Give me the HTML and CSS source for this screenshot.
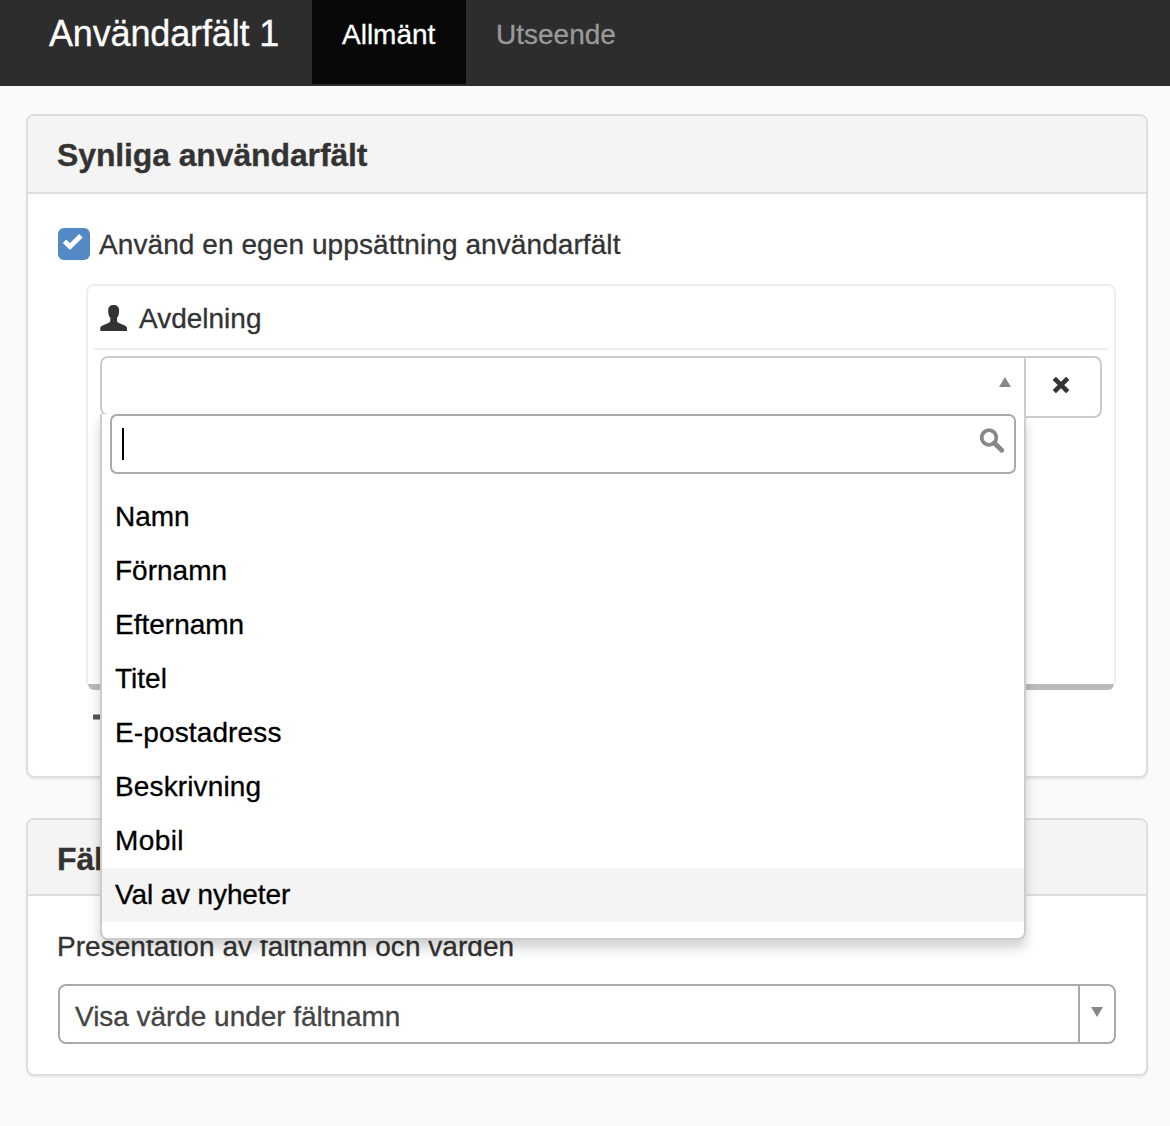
FILE: index.html
```html
<!DOCTYPE html>
<html lang="sv">
<head>
<meta charset="utf-8">
<title>Användarfält 1</title>
<link rel="stylesheet" href="styles.css">
</head>
<body>
<header class="navbar">
  <div class="brand">Användarfält 1</div>
  <nav class="tabs">
    <a class="tab tab-active">Allmänt</a>
    <a class="tab">Utseende</a>
  </nav>
</header>
<main class="content">
  <section class="panel panel-fields">
    <h2 class="panel-heading">Synliga användarfält</h2>
    <div class="panel-body">
      <label class="check-row">
        <span class="checkbox"><svg width="32" height="32" viewBox="0 0 32 32"><path d="M6.500 13.200L12 18.500L22.900 7.800" fill="none" stroke="#fff" stroke-width="5"/></svg></span>
        <span class="check-label">Använd en egen uppsättning användarfält</span>
      </label>
      <div class="field-list">
        <div class="field-row">
          <svg class="user-icon" width="28" height="27" viewBox="0 0 28 27"><path d="M13.6 0C10 0 8 2 8.200 5.500C8.300 8.500 8.600 11.200 10.300 12.800V16C10.100 17.500 8 18.200 5.500 19.200C2 20.500 0.300 21.200 0.300 23V26H27V23C27 21.200 25.300 20.500 21.800 19.200C19.300 18.200 17.200 17.500 17 16V12.800C18.700 11.200 19 8.500 19.100 5.500C19.200 2 17.200 0 13.600 0Z" fill="#333"/></svg>
          <span class="field-name">Avdelning</span>
        </div>
        <div class="picker">
          <div class="select-open">
            <span class="arrow-up"></span>
            <div class="dropdown">
              <div class="search">
                <span class="caret"></span>
                <svg width="26" height="26" viewBox="0 0 26 26"><circle cx="10" cy="9.500" r="7.300" fill="none" stroke="#888" stroke-width="3.800"/><path d="M15.500 15L22.700 22.200" stroke="#888" stroke-width="4.800" stroke-linecap="round"/></svg>
              </div>
              <ul class="options">
                <li>Namn</li>
                <li>Förnamn</li>
                <li>Efternamn</li>
                <li>Titel</li>
                <li class="loose">E-postadress</li>
                <li class="loose">Beskrivning</li>
                <li class="looser">Mobil</li>
                <li class="highlighted">Val av nyheter</li>
              </ul>
            </div>
          </div>
          <button class="remove" aria-label="Ta bort"><svg width="18" height="18" viewBox="0 0 18 18"><path d="M2.300 2.300L15.700 15.700M15.700 2.300L2.300 15.700" stroke="#333" stroke-width="4.600"/></svg></button>
        </div>
      </div>
      <div class="list-edge"></div>
      <svg class="add-icon" width="24" height="24" viewBox="0 0 24 24"><path d="M0 12H24M12 0V24" stroke="#555" stroke-width="5"/></svg>
    </div>
  </section>
  <section class="panel panel-display">
    <h2 class="panel-heading">Fält</h2>
    <div class="panel-body display-body">
      <div class="caption">Presentation av fältnamn och värden</div>
      <div class="select">
        <div class="select-value">Visa värde under fältnamn</div>
        <div class="select-arrow"><span class="arrow-down"></span></div>
      </div>
    </div>
  </section>
</main>
</body>
</html>
```
FILE: styles.css
```css
* { box-sizing: border-box; }
body {
  margin: 0;
  height: 1126px;
  overflow: hidden;
  background: #fafafa;
  color: #333;
  font: 28px/40px "Liberation Sans", Arial, sans-serif;
  -webkit-text-stroke: .3px currentColor;
}
.navbar {
  display: flex;
  height: 86px;
  background: #2d2d2d;
  color: #fff;
}
.brand {
  width: 312px;
  padding: 14px 0 0 49px;
  font-size: 36px;
  letter-spacing: -.15px;
  white-space: nowrap;
}
.tabs { display: flex; height: 84px; }
.tab { padding: 15px 30px 0; color: #999; white-space: nowrap; }
.tab-active { width: 154px; background: #080808; color: #fff; }
.content {
  display: flex;
  flex-direction: column;
  gap: 40px;
  padding: 28px 22px 0 26px;
}
.panel {
  border: 2px solid #ddd;
  border-radius: 8px;
  background: #fff;
  box-shadow: 0 2px 2px rgba(0, 0, 0, .05);
}
.panel-fields { height: 664px; }
.panel-display { height: 258px; }
.panel-heading {
  height: 78px;
  margin: 0;
  padding: 19px 29px 0;
  border-bottom: 2px solid #ddd;
  border-radius: 6px 6px 0 0;
  background: #f4f4f4;
  font-size: 32px;
  line-height: 40px;
  letter-spacing: -.13px;
}
.panel-display .panel-heading { height: 76px; }
.panel-body { padding: 34px 30px 0; }
.check-row { display: flex; height: 32px; align-items: center; gap: 9px; white-space: nowrap; }
.checkbox { width: 32px; height: 32px; border-radius: 6px; background: #5389c6; }
.checkbox svg { display: block; }
.check-label { padding-top: 2px; letter-spacing: .08px; }
.field-list {
  height: 400px;
  margin: 24px 0 0 28px;
  padding: 0 6px;
  border: 2px solid #eee;
  border-bottom: 0;
  border-radius: 8px 8px 0 0;
}
.field-row {
  display: flex;
  height: 64px;
  align-items: center;
  gap: 11px;
  padding-left: 6px;
  border-bottom: 2px solid #eee;
}
.user-icon { margin-top: 2px; }
.field-name { margin-top: 3px; }
.picker { display: flex; width: 1002px; height: 62px; margin: 6px 0 0 6px; }
.select-open {
  position: relative;
  display: flex;
  justify-content: flex-end;
  width: 926px;
  height: 60px;
  padding: 19px 13px 0 0;
  border: 2px solid #ccc;
  border-radius: 8px 0 0 8px;
}
.arrow-up { width: 0; height: 10px; border: 6px solid transparent; border-top: 0; border-bottom: 10px solid #888; }
.dropdown {
  position: absolute;
  z-index: 2;
  top: 56px;
  left: -2px;
  width: 926px;
  height: 526px;
  padding: 0 8px;
  border: 2px solid #ccc;
  border-top: 0;
  border-radius: 0 0 8px 8px;
  background: #fff;
  box-shadow: 0 8px 12px rgba(0, 0, 0, .18);
  color: #000;
}
.search {
  display: flex;
  justify-content: space-between;
  height: 60px;
  padding: 12px 9px 0 10px;
  border: 2px solid #aaa;
  border-radius: 7px;
}
.caret { width: 2px; height: 32px; background: #000; }
.options { margin: 16px -8px 0; padding: 0; list-style: none; }
.options li { height: 54px; padding: 7px 13px; }
.options .loose { letter-spacing: .13px; }
.options .looser { letter-spacing: .4px; }
.options .highlighted { background: #f4f4f4; letter-spacing: -.13px; }
.remove {
  display: flex;
  align-items: flex-start;
  justify-content: center;
  width: 78px;
  height: 62px;
  margin-left: -2px;
  padding: 18px 5px 0 0;
  border: 2px solid #ccc;
  border-radius: 0 8px 8px 0;
  background: #fff;
}
.list-edge { height: 6px; margin: 0 2px 0 30px; border-radius: 0 0 8px 8px; background: #bbb; }
.add-icon { display: block; margin: 15px 0 0 35px; }
.display-body { padding-top: 31px; }
.caption { margin-left: -1px; height: 57px; letter-spacing: .03px; }
.select { display: flex; height: 60px; border: 2px solid #aaa; border-radius: 8px; color: #444; }
.select-value { flex: 1; padding: 11px 15px 0; letter-spacing: -.04px; }
.select-arrow { display: flex; justify-content: center; width: 36px; padding-top: 21px; border-left: 2px solid #aaa; }
.arrow-down { width: 0; height: 10px; border: 6px solid transparent; border-bottom: 0; border-top: 10px solid #888; }
```
